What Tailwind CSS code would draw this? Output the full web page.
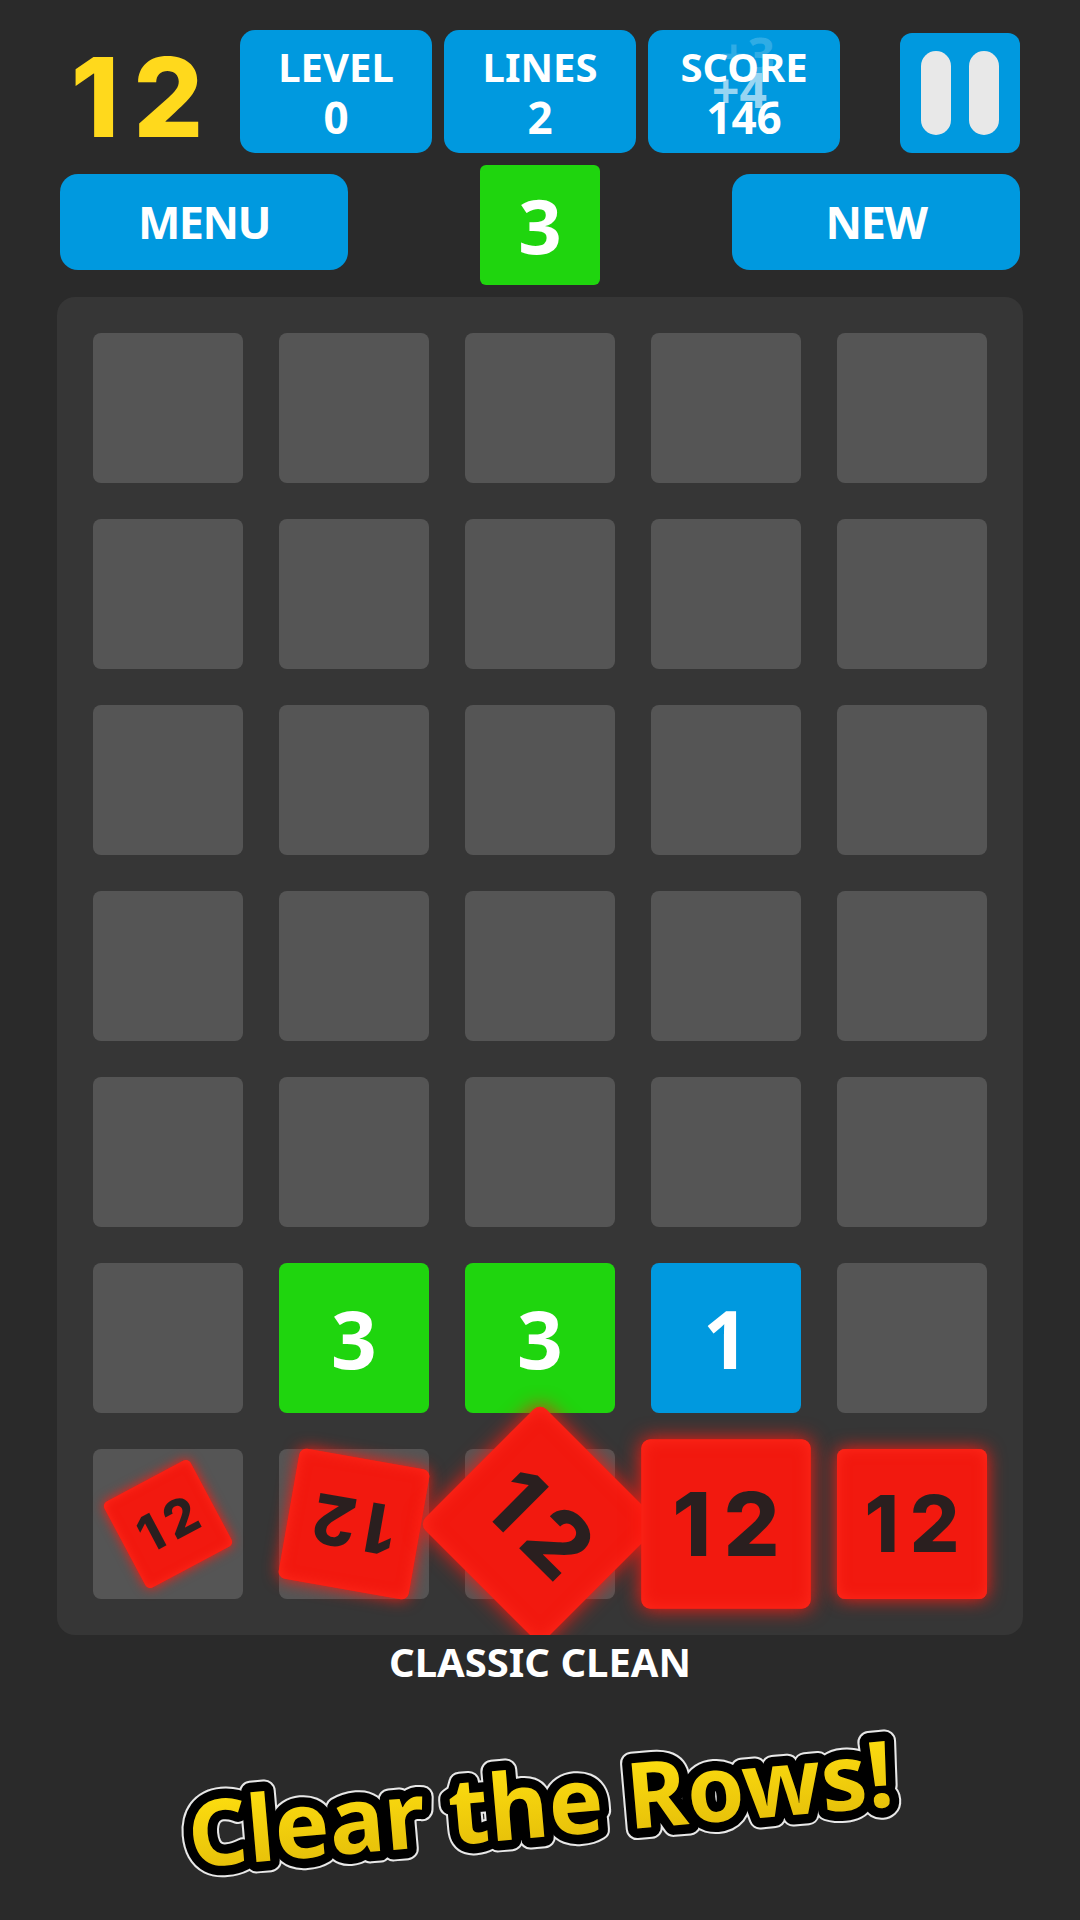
<!DOCTYPE html>
<html lang="en">
<head>
<meta charset="UTF-8" />
<title>Clear the Rows</title>
<script src="https://cdn.jsdelivr.net/npm/@tailwindcss/browser@4"></script>
</head>
<body class="bg-[#2a2a2a]">
<div class="w-[1080px] h-[1920px] overflow-hidden bg-[#2a2a2a] font-['Noto_Sans',sans-serif] font-bold text-white">

  <!-- stats -->
  <div class="flex pt-[30px] pl-[60px]">
    <div class="w-[180px] h-[123px] flex items-center justify-center pt-[10px] pr-[12px] font-['Inter'] font-extrabold text-[110px] tracking-[14px] leading-none text-[#ffd91c]">12</div>
    <div class="flex gap-[12px]">
      <div class="w-[192px] h-[123px] rounded-[15px] bg-[#0099df] flex flex-col items-center justify-center text-[40px] leading-[50px]"><span>LEVEL</span><span class="text-[44px]">0</span></div>
      <div class="w-[192px] h-[123px] rounded-[15px] bg-[#0099df] flex flex-col items-center justify-center text-[40px] leading-[50px]"><span>LINES</span><span class="text-[44px]">2</span></div>
      <div class="relative w-[192px] h-[123px] rounded-[15px] bg-[#0099df] flex flex-col items-center justify-center text-[40px] leading-[50px]">
        <span>SCORE</span><span class="text-[44px]">146</span>
        <span class="absolute left-[72px] top-0 text-[48px] leading-[50px] text-white/20">+3</span>
        <span class="absolute left-[64px] top-[35px] text-[48px] leading-[50px] text-white/60">+4</span>
      </div>
    </div>
    <div class="ml-[60px] mt-[3px] w-[120px] h-[120px] rounded-[12px] bg-[#0099df] flex items-center justify-center gap-[18px]">
      <div class="w-[30px] h-[84px] rounded-[15px] bg-[#e8e8e8]"></div>
      <div class="w-[30px] h-[84px] rounded-[15px] bg-[#e8e8e8]"></div>
    </div>
  </div>

  <!-- actions -->
  <div class="flex justify-between items-start mt-[12px] px-[60px]">
    <div class="mt-[9px] w-[288px] h-[96px] rounded-[18px] bg-[#0099df] flex items-center justify-center text-[45px] tracking-[-1.5px]">MENU</div>
    <div class="w-[120px] h-[120px] rounded-[6px] bg-[#1fd50e] flex items-center justify-center text-[76px] leading-none">3</div>
    <div class="mt-[9px] w-[288px] h-[96px] rounded-[18px] bg-[#0099df] flex items-center justify-center text-[45px] tracking-[-1.5px]">NEW</div>
  </div>

  <!-- board -->
  <div class="mt-[12px] mx-[57px] w-[966px] h-[1338px] p-[36px] rounded-[18px] bg-[#363636] overflow-hidden grid grid-cols-[repeat(5,150px)] grid-rows-[repeat(7,150px)] gap-[36px]">
    <div class="rounded-[8px] bg-[#555555]"></div>
    <div class="rounded-[8px] bg-[#555555]"></div>
    <div class="rounded-[8px] bg-[#555555]"></div>
    <div class="rounded-[8px] bg-[#555555]"></div>
    <div class="rounded-[8px] bg-[#555555]"></div>

    <div class="rounded-[8px] bg-[#555555]"></div>
    <div class="rounded-[8px] bg-[#555555]"></div>
    <div class="rounded-[8px] bg-[#555555]"></div>
    <div class="rounded-[8px] bg-[#555555]"></div>
    <div class="rounded-[8px] bg-[#555555]"></div>

    <div class="rounded-[8px] bg-[#555555]"></div>
    <div class="rounded-[8px] bg-[#555555]"></div>
    <div class="rounded-[8px] bg-[#555555]"></div>
    <div class="rounded-[8px] bg-[#555555]"></div>
    <div class="rounded-[8px] bg-[#555555]"></div>

    <div class="rounded-[8px] bg-[#555555]"></div>
    <div class="rounded-[8px] bg-[#555555]"></div>
    <div class="rounded-[8px] bg-[#555555]"></div>
    <div class="rounded-[8px] bg-[#555555]"></div>
    <div class="rounded-[8px] bg-[#555555]"></div>

    <div class="rounded-[8px] bg-[#555555]"></div>
    <div class="rounded-[8px] bg-[#555555]"></div>
    <div class="rounded-[8px] bg-[#555555]"></div>
    <div class="rounded-[8px] bg-[#555555]"></div>
    <div class="rounded-[8px] bg-[#555555]"></div>

    <div class="rounded-[8px] bg-[#555555]"></div>
    <div class="rounded-[8px] bg-[#1fd50e] flex items-center justify-center text-[80px] leading-none">3</div>
    <div class="rounded-[8px] bg-[#1fd50e] flex items-center justify-center text-[80px] leading-none">3</div>
    <div class="rounded-[8px] bg-[#0099df] flex items-center justify-center text-[80px] leading-none">1</div>
    <div class="rounded-[8px] bg-[#555555]"></div>

    <!-- last row, mid clear animation -->
    <div class="relative rounded-[8px] bg-[#555555]">
      <div class="absolute inset-0 rounded-[8px] bg-[#f2190f] shadow-[0_0_18px_#ff1a10,inset_0_0_14px_#ff2a1c] text-[#2a1f1f] flex items-center justify-center pl-[11px] font-['Inter'] font-extrabold text-[78px] tracking-[11px] leading-none scale-[0.65] rotate-[-28deg]">12</div>
    </div>
    <div class="relative rounded-[8px] bg-[#555555]">
      <div class="absolute inset-0 rounded-[8px] bg-[#f2190f] shadow-[0_0_18px_#ff1a10,inset_0_0_14px_#ff2a1c] text-[#2a1f1f] flex items-center justify-center pl-[11px] font-['Inter'] font-extrabold text-[78px] tracking-[11px] leading-none scale-[0.88] rotate-[190deg]">12</div>
    </div>
    <div class="relative rounded-[8px] bg-[#555555]">
      <div class="absolute inset-0 rounded-[8px] bg-[#f2190f] shadow-[0_0_18px_#ff1a10,inset_0_0_14px_#ff2a1c] text-[#2a1f1f] flex items-center justify-center pl-[11px] font-['Inter'] font-extrabold text-[78px] tracking-[11px] leading-none scale-[1.14] rotate-45">12</div>
    </div>
    <div class="relative rounded-[8px] bg-[#555555]">
      <div class="absolute inset-0 rounded-[8px] bg-[#f2190f] shadow-[0_0_18px_#ff1a10,inset_0_0_14px_#ff2a1c] text-[#2a1f1f] flex items-center justify-center pl-[11px] font-['Inter'] font-extrabold text-[78px] tracking-[11px] leading-none scale-[1.13]">12</div>
    </div>
    <div class="relative rounded-[8px] bg-[#555555]">
      <div class="absolute inset-0 rounded-[8px] bg-[#f2190f] shadow-[0_0_18px_#ff1a10,inset_0_0_14px_#ff2a1c] text-[#2a1f1f] flex items-center justify-center pl-[11px] font-['Inter'] font-extrabold text-[78px] tracking-[11px] leading-none">12</div>
    </div>
  </div>

  <div class="mt-[3px] text-center text-[40px] leading-[48px]">CLASSIC CLEAN</div>

  <!-- banner -->
  <svg class="mt-[50px] mx-auto w-[740px] h-[130px] overflow-visible rotate-[-5deg] text-[92px] font-bold [stroke-linejoin:round]" viewBox="0 0 740 130">
    <defs>
      <linearGradient id="bannerFill" x1="0" y1="0" x2="0" y2="1">
        <stop offset="0.15" stop-color="#ffe010" />
        <stop offset="1" stop-color="#e0b808" />
      </linearGradient>
    </defs>
    <text x="370" y="101" text-anchor="middle" fill="#000000" stroke="#e8e8e8" stroke-width="23">Clear the Rows!</text>
    <text x="370" y="101" text-anchor="middle" fill="#000000" stroke="#000000" stroke-width="19">Clear the Rows!</text>
    <text x="370" y="101" text-anchor="middle" fill="url(#bannerFill)">Clear the Rows!</text>
  </svg>
</div>
</body>
</html>
